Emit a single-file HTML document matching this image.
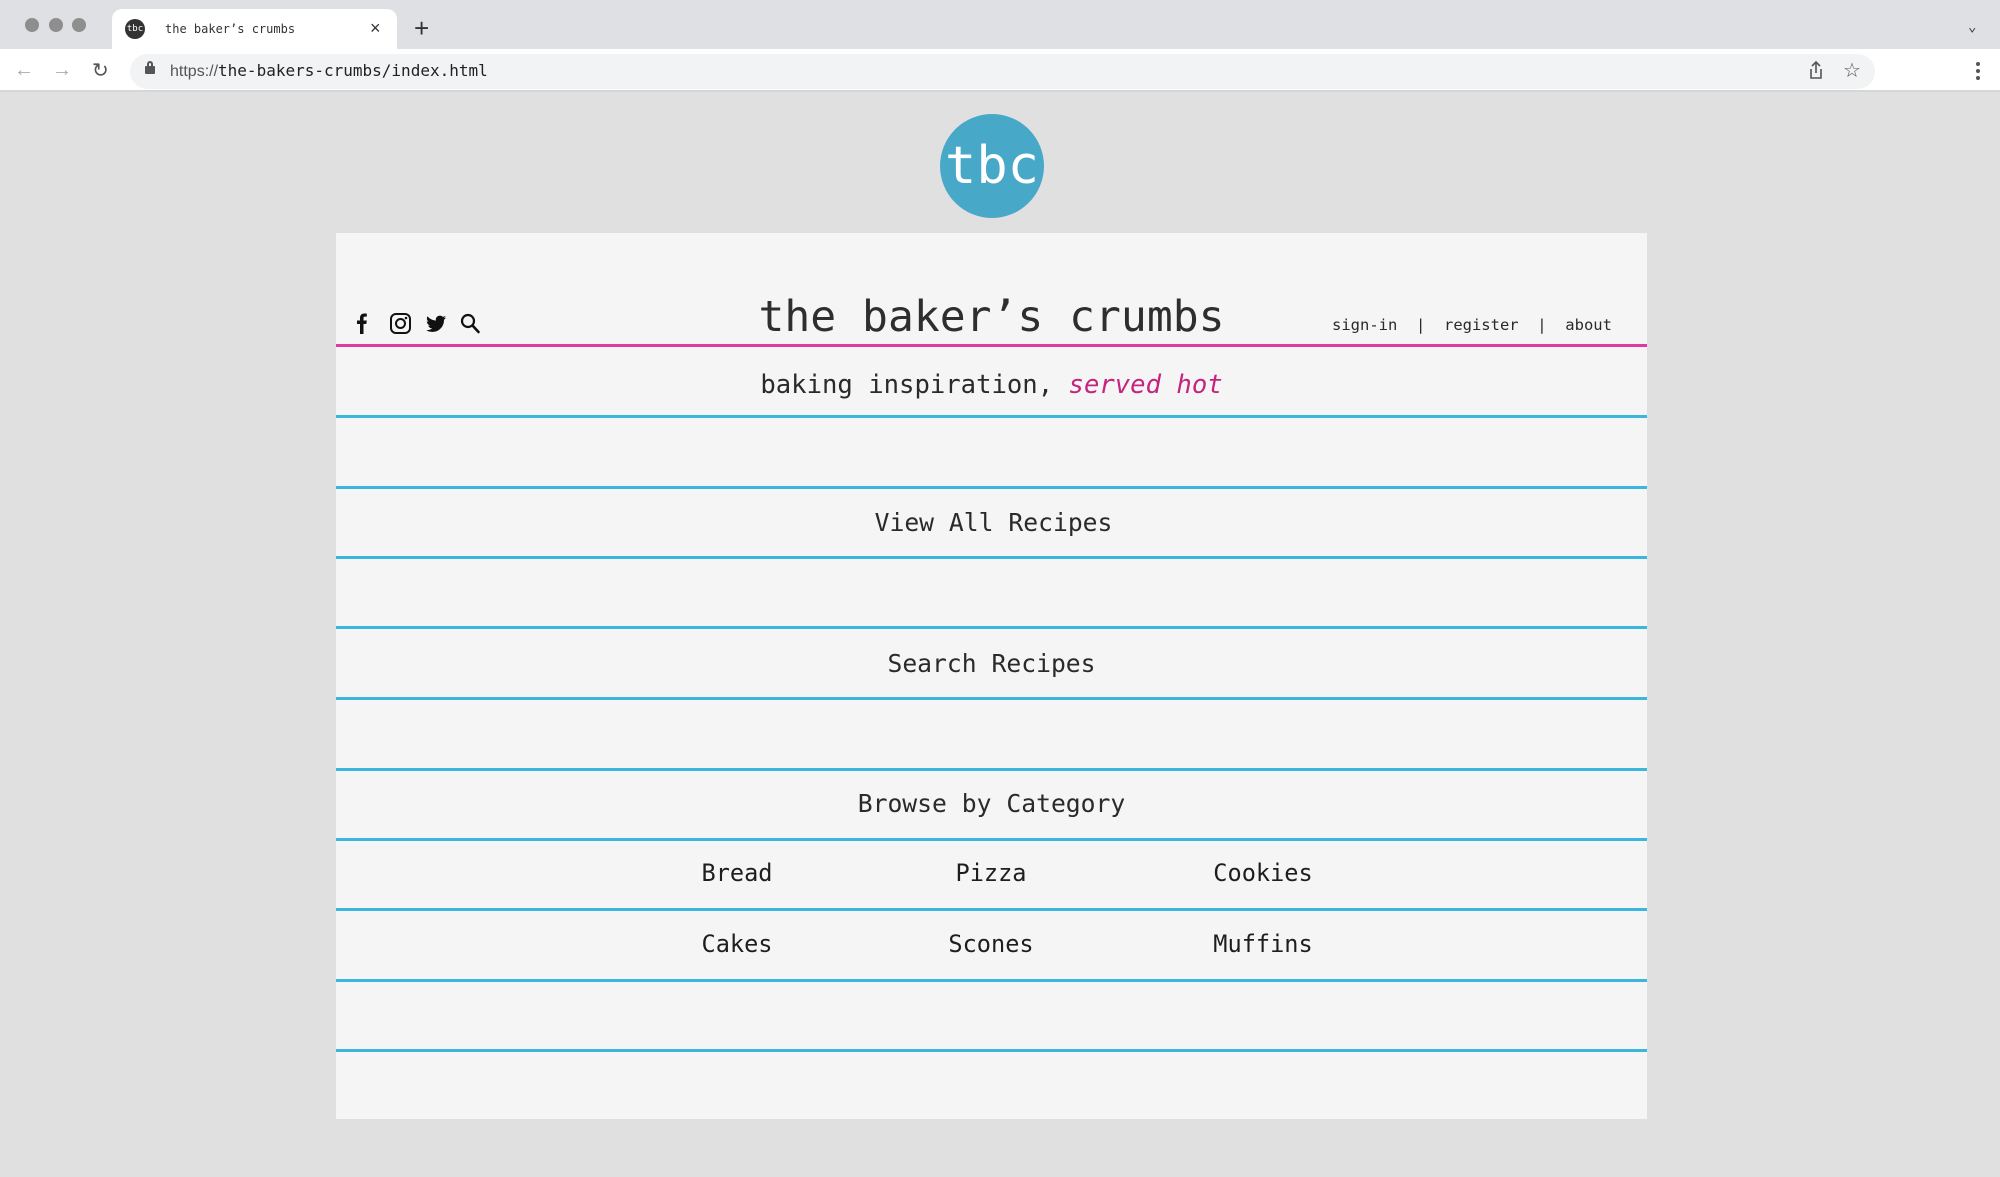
<!DOCTYPE html>
<html><head><meta charset="utf-8"><style>
*{margin:0;padding:0;box-sizing:border-box}
body{width:2000px;height:1177px;background:#e0e0e0;position:relative;overflow:hidden;font-family:"DejaVu Sans Mono","Liberation Mono",monospace;color:#2a2a2a}
.a{position:absolute;line-height:1;white-space:nowrap}
.c{text-align:center}
.bl{position:absolute;left:336px;width:1311px;height:3px;background:#3cb6dc}
</style></head><body>
<!-- browser chrome -->
<div class="a" style="left:0;top:0;width:2000px;height:49px;background:#dfe0e3"></div>
<div class="a" style="left:25px;top:18px;width:14px;height:14px;border-radius:50%;background:#8e8e8e"></div>
<div class="a" style="left:49px;top:18px;width:14px;height:14px;border-radius:50%;background:#8e8e8e"></div>
<div class="a" style="left:72px;top:18px;width:14px;height:14px;border-radius:50%;background:#8e8e8e"></div>
<div class="a" style="left:112px;top:9px;width:285px;height:40px;background:#fff;border-radius:10px 10px 0 0"></div>
<div class="a" style="left:125px;top:19px;width:20px;height:20px;border-radius:50%;background:#333;color:#fff;font-size:9px;line-height:20px;text-align:center">tbc</div>
<div class="a" style="left:165px;top:23px;font-size:12px;color:#333">the baker’s crumbs</div>
<div class="a" style="left:370px;top:19px;font-size:18px;font-family:'Liberation Sans',sans-serif;color:#333">×</div>
<div class="a" style="left:414px;top:15px;font-size:26px;font-family:'Liberation Sans',sans-serif;color:#333">+</div>
<div class="a" style="left:1968px;top:20px;font-size:14px;color:#333">⌄</div>
<div class="a" style="left:0;top:49px;width:2000px;height:43px;background:#fff;border-bottom:2px solid #d6d6d6"></div>
<div class="a" style="left:14px;top:60px;font-size:20px;color:#aaa;font-family:'Liberation Sans',sans-serif">←</div>
<div class="a" style="left:52px;top:60px;font-size:20px;color:#aaa;font-family:'Liberation Sans',sans-serif">→</div>
<div class="a" style="left:92px;top:60px;font-size:20px;color:#555;font-family:'DejaVu Sans',sans-serif">↻</div>
<div class="a" style="left:130px;top:54px;width:1745px;height:35px;border-radius:18px;background:#f1f3f4"></div>
<div class="a" style="left:145px;top:66px;width:10px;height:8px;background:#555;border-radius:1px"></div>
<div class="a" style="left:147px;top:61px;width:6px;height:7px;border:2px solid #555;border-bottom:none;border-radius:3px 3px 0 0"></div>
<div class="a" style="left:170px;top:63px;font-size:16px;color:#222"><span style="font-family:'Liberation Sans',sans-serif;color:#555">https://</span>the-bakers-crumbs/index.html</div>
<svg class="a" style="left:1808px;top:60px" width="16" height="20" viewBox="0 0 16 20" fill="none" stroke="#555" stroke-width="1.6"><path d="M8 2v11M4 6l4-4 4 4M3 9v9h10V9"/></svg>
<div class="a" style="left:1843px;top:60px;font-size:20px;color:#555;font-family:'DejaVu Sans',sans-serif">☆</div>
<div class="a" style="left:1976px;top:62px;width:4px;height:4px;border-radius:50%;background:#555;box-shadow:0 7px 0 #555,0 14px 0 #555"></div>

<!-- logo -->
<div class="a" style="left:940px;top:114px;width:104px;height:104px;border-radius:50%;background:#47a8c8;color:#fff;font-size:52px;line-height:104px;text-align:center">tbc</div>

<!-- card -->
<div class="a" style="left:336px;top:233px;width:1311px;height:886px;background:#f5f5f5"></div>

<!-- icons -->
<svg class="a" style="left:354px;top:311px" width="140" height="24" viewBox="0 0 140 24">
<path d="M6 23V13H3V9.5h3V7c0-3 1.7-4.5 4.300-4.5 1.2 0 2.2.1 2.5.1v3h-1.8C9.7 5.6 9.5 6.3 9.5 7.3v2.2h3.3L12.3 13H9.5v10z" fill="#111"/>
<rect x="37" y="3" width="19" height="19" rx="5" fill="none" stroke="#111" stroke-width="2"/>
<circle cx="46.5" cy="12.5" r="4.5" fill="none" stroke="#111" stroke-width="2"/>
<circle cx="52" cy="7" r="1.3" fill="#111"/>
<path d="M92 6.5c-.7.3-1.5.5-2.3.6.8-.5 1.5-1.3 1.8-2.2-.8.5-1.7.8-2.6 1-.8-.8-1.800-1.300-3-1.300-2.3 0-4.1 1.8-4.1 4.1 0 .3 0 .6.1.9-3.4-.2-6.4-1.8-8.4-4.3-.4.6-.6 1.3-.6 2.1 0 1.4.7 2.7 1.8 3.4-.7 0-1.3-.2-1.9-.5 0 2 1.4 3.7 3.3 4.1-.6.2-1.3.2-1.9.1.5 1.6 2 2.8 3.9 2.9-1.4 1.1-3.2 1.8-5.1 1.8-.3 0-.7 0-1-.1 1.8 1.2 4 1.8 6.3 1.8 7.6 0 11.7-6.3 11.7-11.7v-.5c.8-.6 1.5-1.3 2-2.2z" fill="#111"/>
<circle cx="114" cy="10" r="6" fill="none" stroke="#111" stroke-width="2.2"/>
<path d="M118.5 14.5l6 6.5" stroke="#111" stroke-width="2.6" stroke-linecap="round"/>
</svg>

<div class="a c" style="left:336px;width:1311px;top:296px;font-size:43px;color:#2e2e2e">the baker’s crumbs</div>
<div class="a" style="left:1332px;top:318px;font-size:15.5px;color:#2a2a2a">sign-in&nbsp;&nbsp;|&nbsp;&nbsp;register&nbsp;&nbsp;|&nbsp;&nbsp;about</div>

<div class="a" style="left:336px;top:344px;width:1311px;height:3px;background:#de3aa0"></div>
<div class="a c" style="left:336px;width:1311px;top:373px;font-size:25.6px">baking inspiration, <i style="color:#c4237f">served hot</i></div>

<div class="bl" style="top:415px"></div>
<div class="bl" style="top:486px"></div>
<div class="a c" style="left:336px;width:1311px;top:511px;font-size:24.7px;padding-left:4px">View All Recipes</div>
<div class="bl" style="top:556px"></div>
<div class="bl" style="top:626px"></div>
<div class="a c" style="left:336px;width:1311px;top:652px;font-size:24.7px">Search Recipes</div>
<div class="bl" style="top:697px"></div>
<div class="bl" style="top:768px"></div>
<div class="a c" style="left:336px;width:1311px;top:792px;font-size:24.7px">Browse by Category</div>
<div class="bl" style="top:838px"></div>
<div class="a c" style="left:637px;width:200px;top:862px;font-size:23.6px;color:#1e1e1e">Bread</div>
<div class="a c" style="left:891px;width:200px;top:862px;font-size:23.6px;color:#1e1e1e">Pizza</div>
<div class="a c" style="left:1163px;width:200px;top:862px;font-size:23.6px;color:#1e1e1e">Cookies</div>
<div class="bl" style="top:908px"></div>
<div class="a c" style="left:637px;width:200px;top:933px;font-size:23.6px;color:#1e1e1e">Cakes</div>
<div class="a c" style="left:891px;width:200px;top:933px;font-size:23.6px;color:#1e1e1e">Scones</div>
<div class="a c" style="left:1163px;width:200px;top:933px;font-size:23.6px;color:#1e1e1e">Muffins</div>
<div class="bl" style="top:979px"></div>
<div class="bl" style="top:1049px"></div>
</body></html>
